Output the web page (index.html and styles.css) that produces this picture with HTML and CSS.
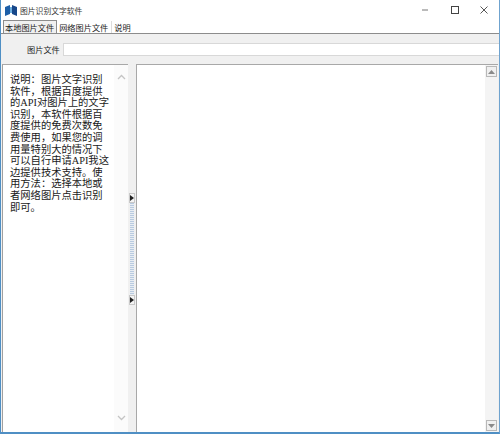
FILE: index.html
```html
<!DOCTYPE html>
<html lang="zh">
<head>
<meta charset="utf-8">
<title>图片识别文字软件</title>
<link rel="stylesheet" href="styles.css">
</head>
<body>
<div class="window">
  <header class="titlebar">
    <svg class="logo" width="12" height="11" viewBox="0 0 12 11"><path d="M0 2l5-2v9l-5 2z" fill="#1d5fa8"/><path d="M7 0l5 2v9l-5-2z" fill="#17478a"/><path d="M5 2h2v6H5z" fill="#6fb0e0"/></svg>
    <span class="title">图片识别文字软件</span>
    <div class="controls">
      <svg width="10" height="10" viewBox="0 0 10 10"><path d="M2 5h6" stroke="#777" stroke-width="1"/></svg>
      <svg width="10" height="10" viewBox="0 0 10 10"><rect x="1.500" y="1.500" width="7" height="7" fill="none" stroke="#444"/></svg>
      <svg width="10" height="10" viewBox="0 0 10 10"><path d="M1.500 1.500l7 7M8.500 1.500l-7 7" stroke="#444" stroke-width="0.900"/></svg>
    </div>
  </header>
  <nav class="tabs">
    <span class="tab active">本地图片文件</span>
    <span class="tab">网络图片文件</span>
    <span class="tab sep">说明</span>
  </nav>
  <div class="filebar">
    <label class="filelabel">图片文件</label>
    <div class="fileinput"></div>
  </div>
  <main class="panes">
    <section class="left">
      <p class="desc">说明：图片文字识别<br>软件，根据百度提供<br>的API对图片上的文字<br>识别，本软件根据百<br>度提供的免费次数免<br>费使用，如果您的调<br>用量特别大的情况下<br>可以自行申请API我这<br>边提供技术支持。使<br>用方法：选择本地或<br>者网络图片点击识别<br>即可。</p>
      <div class="ghostbar">
        <svg width="9" height="6" viewBox="0 0 9 6"><path d="M1 5l3.500-3.500L8 5" fill="none" stroke="#c4c4c4" stroke-width="1.300"/></svg>
        <svg width="9" height="6" viewBox="0 0 9 6"><path d="M1 1l3.500 3.500L8 1" fill="none" stroke="#c4c4c4" stroke-width="1.300"/></svg>
      </div>
    </section>
    <div class="splitter">
      <span class="grip"><svg width="4" height="6" viewBox="0 0 4 6"><path d="M0 0l4 3-4 3z" fill="#222"/></svg></span>
      <span class="dots"></span>
      <span class="grip"><svg width="4" height="6" viewBox="0 0 4 6"><path d="M0 0l4 3-4 3z" fill="#222"/></svg></span>
    </div>
    <section class="right">
      <div class="scrollbar">
        <span class="arrow"><svg width="7" height="4" viewBox="0 0 7 4"><path d="M0 4l3.500-4L7 4z" fill="#8a8a8a"/></svg></span>
        <span class="arrow"><svg width="7" height="4" viewBox="0 0 7 4"><path d="M0 0l3.500 4L7 0z" fill="#8a8a8a"/></svg></span>
      </div>
    </section>
  </main>
</div>
</body>
</html>
```
FILE: styles.css
```css
html, body { margin: 0; padding: 0; }
body { width: 500px; height: 434px; overflow: hidden; font-family: "Noto Sans CJK SC", "Liberation Sans", sans-serif; }
.window { width: 500px; height: 434px; box-sizing: border-box; display: flex; flex-direction: column; background: #f0f0f0; border-left: 1px solid #4f8fc4; border-right: 1px solid #6fa3cf; border-bottom: 2px solid #4f8fc4; }
.titlebar { height: 20px; flex: none; display: flex; align-items: center; background: #fff; padding-left: 4px; }
.logo { margin-right: 3px; }
.title { font-size: 7.800px; color: #333; white-space: nowrap; }
.controls { margin-left: auto; display: flex; gap: 19.500px; padding-right: 10px; }
.tabs { height: 14px; flex: none; box-sizing: border-box; display: flex; align-items: flex-end; background: #fff; border-bottom: 1px solid #8c8c8c; padding-left: 2px; }
.tab { font-size: 8.200px; line-height: 12px; color: #222; padding: 0 2px; white-space: nowrap; }
.tab.active { background: #f0f0f0; border: 1px solid #8c8c8c; border-bottom: 0; padding: 0 2px 0 1px; }
.tab.sep { border-left: 1px solid #ddd; margin-left: 1px; }
.filebar { height: 30px; flex: none; box-sizing: border-box; display: flex; align-items: center; padding-left: 26px; }
.filelabel { font-size: 8.200px; color: #222; width: 36px; flex: none; white-space: nowrap; }
.fileinput { flex: 1; height: 11px; background: #fff; border: 1px solid #d8d8d8; border-right: 0; }
.panes { flex: 1; min-height: 0; display: flex; padding-left: 1px; }
.left { width: 126px; flex: none; box-sizing: border-box; background: #fff; border-top: 1px solid #a8a8a8; border-left: 1px solid #a0a0a0; display: flex; }
.desc { margin: 0; padding: 9px 0 0 7px; flex: 1; font-family: "Liberation Serif", "Noto Sans CJK SC", serif; font-size: 10.300px; line-height: 11.600px; color: #1a1a1a; white-space: nowrap; }
.ghostbar { width: 14px; flex: none; background: #fbfbfb; display: flex; flex-direction: column; justify-content: space-between; align-items: center; padding: 9px 0 11px; box-sizing: border-box; }
.splitter { width: 6px; flex: none; box-sizing: border-box; margin-left: 1px; display: flex; flex-direction: column; align-items: center; padding-top: 129px; }
.grip { width: 6px; height: 10px; flex: none; display: flex; align-items: center; justify-content: center; background: #f4f4f4; border: 1px solid #c8c8c8; box-sizing: border-box; }
.dots { width: 4px; height: 92px; flex: none; background: repeating-linear-gradient(to bottom, #b9cbe0 0 1px, #e8edf3 1px 2px); }
.right { flex: 1; margin-left: 1px; margin-right: 1px; background: #fff; border-top: 1px solid #a8a8a8; border-left: 1px solid #a8a8a8; display: flex; justify-content: flex-end; }
.scrollbar { width: 13px; flex: none; background: #f4f4f4; display: flex; flex-direction: column; justify-content: space-between; align-items: center; padding: 1px 0; box-sizing: border-box; }
.arrow { width: 11px; height: 11px; display: flex; align-items: center; justify-content: center; background: #f0f0f0; border: 1px solid #b8b8b8; box-sizing: border-box; }
```
